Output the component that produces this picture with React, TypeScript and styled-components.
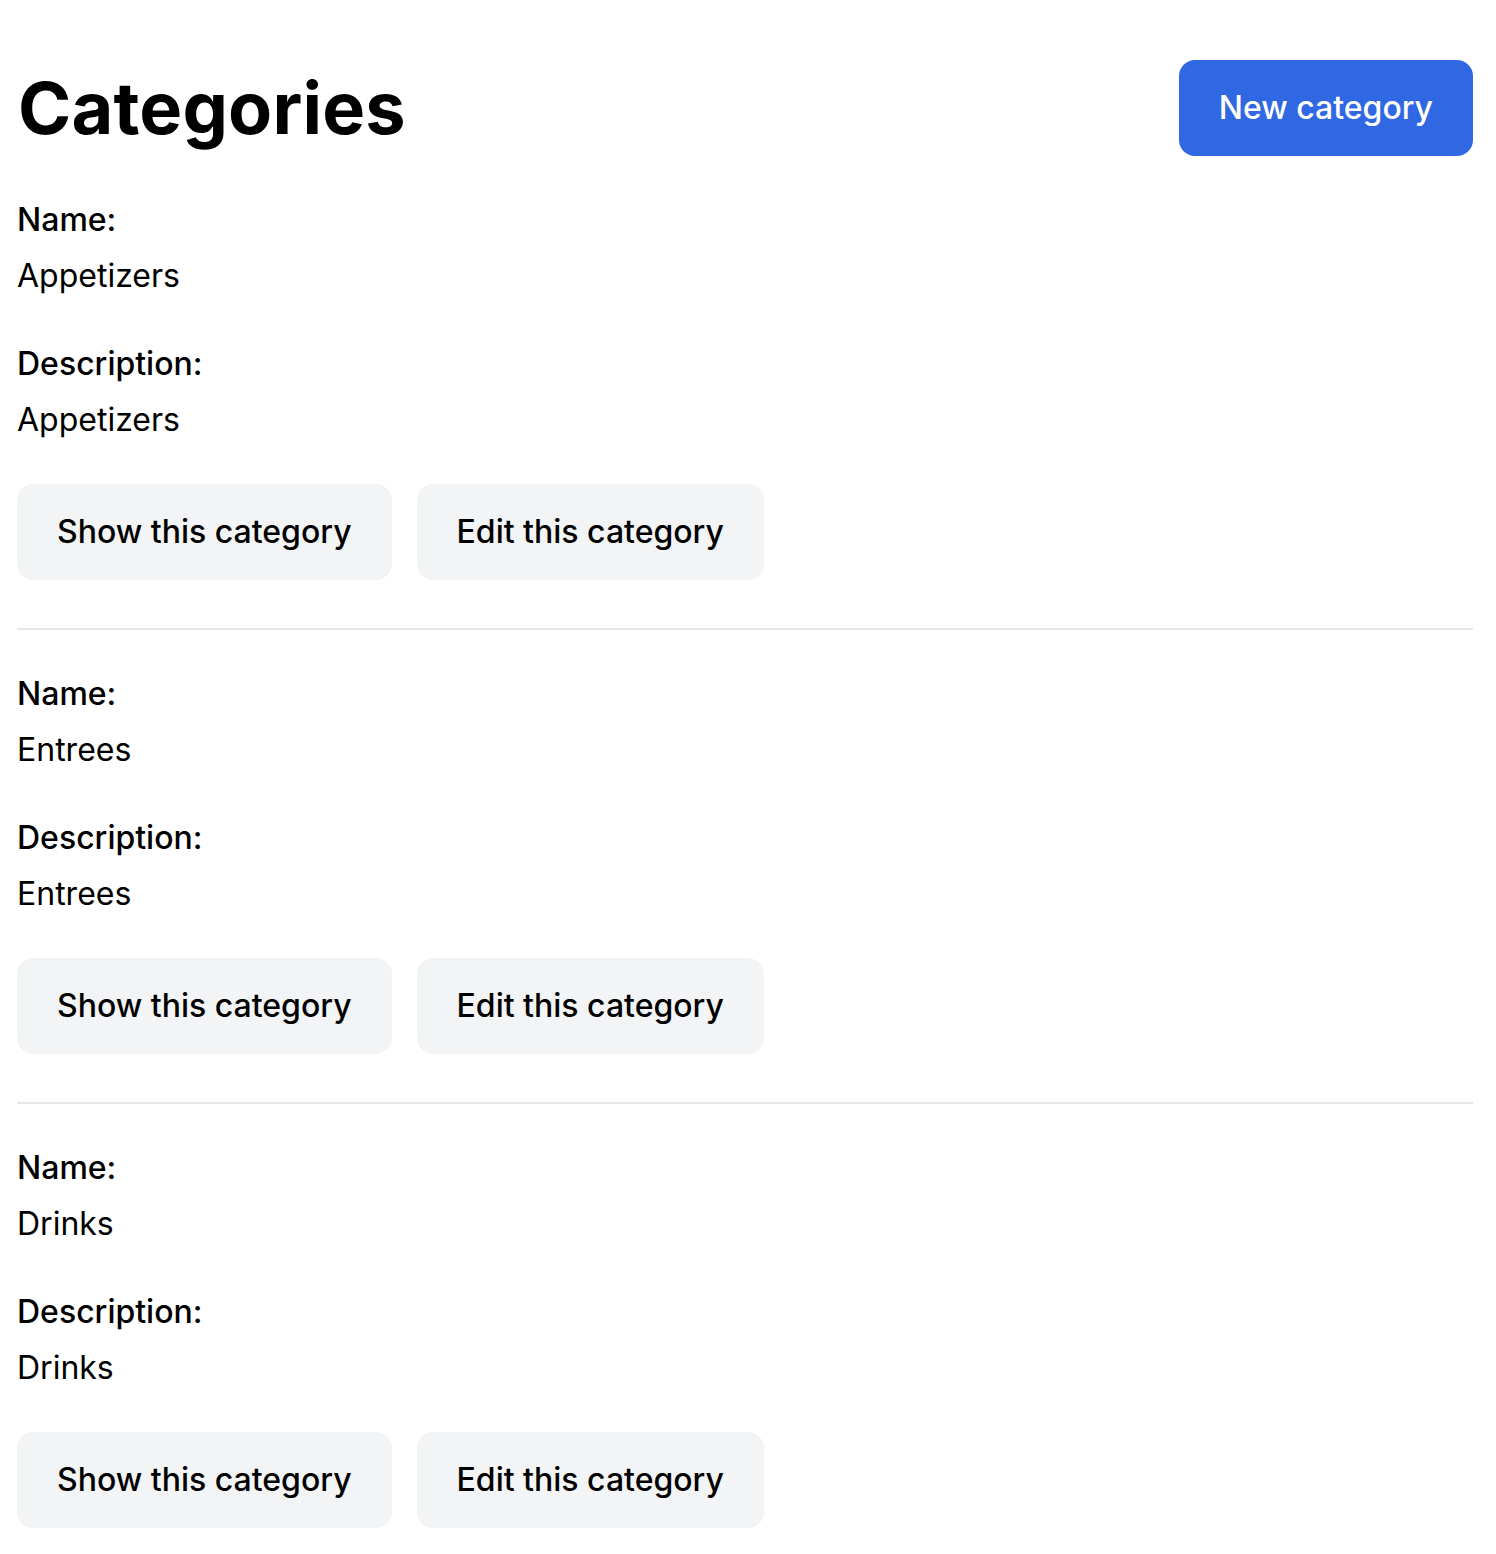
import React from "react";
import styled, { createGlobalStyle } from "styled-components";

const GlobalStyle = createGlobalStyle`
  * { box-sizing: border-box; }
  html, body { margin: 0; padding: 0; background: #ffffff; }
  body {
    font-family: Inter, "Noto Sans", "Liberation Sans", sans-serif;
    font-size: 32px;
    line-height: 48px;
    color: #000000;
  }
`;

const Page = styled.main`
  padding: 60px 23px 0 17px;
  width: 100%;
`;

const Header = styled.div`
  display: flex;
  justify-content: space-between;
  align-items: center;
`;

const Title = styled.h1`
  margin: 0 0 0 1px;
  font-size: 72px;
  line-height: 80px;
  font-weight: 700;
  letter-spacing: 0.2px;
`;

const LinkButton = styled.a<{ $primary?: boolean }>`
  display: block;
  padding: 24px 40px;
  border-radius: 16px;
  line-height: 48px;
  font-size: 32px;
  font-weight: 500;
  text-decoration: none;
  white-space: nowrap;
  background: ${(p) => (p.$primary ? "#3068e3" : "#f3f4f6")};
  color: ${(p) => (p.$primary ? "#ffffff" : "#000000")};
`;

const List = styled.div`
  display: flex;
  flex-direction: column;
`;

const Item = styled.div`
  display: flex;
  flex-direction: column;
  gap: 40px;
  padding: 40px 0 48px;
  border-bottom: 2px solid #e5e7eb;
`;

const Field = styled.div`
  display: flex;
  flex-direction: column;
  gap: 8px;
`;

const Label = styled.strong`
  font-weight: 500;
  line-height: 48px;
`;

const Value = styled.span`
  line-height: 48px;
`;

const Actions = styled.div`
  display: flex;
  gap: 25px;
`;

const categories = [
  { name: "Appetizers", description: "Appetizers" },
  { name: "Entrees", description: "Entrees" },
  { name: "Drinks", description: "Drinks" },
];

export default function App() {
  return (
    <>
      <GlobalStyle />
      <Page>
        <Header>
          <Title>Categories</Title>
          <LinkButton $primary href="#">New category</LinkButton>
        </Header>
        <List>
          {categories.map((c) => (
            <Item key={c.name}>
              <Field>
                <Label>Name:</Label>
                <Value>{c.name}</Value>
              </Field>
              <Field>
                <Label>Description:</Label>
                <Value>{c.description}</Value>
              </Field>
              <Actions>
                <LinkButton href="#">Show this category</LinkButton>
                <LinkButton href="#">Edit this category</LinkButton>
              </Actions>
            </Item>
          ))}
        </List>
      </Page>
    </>
  );
}
